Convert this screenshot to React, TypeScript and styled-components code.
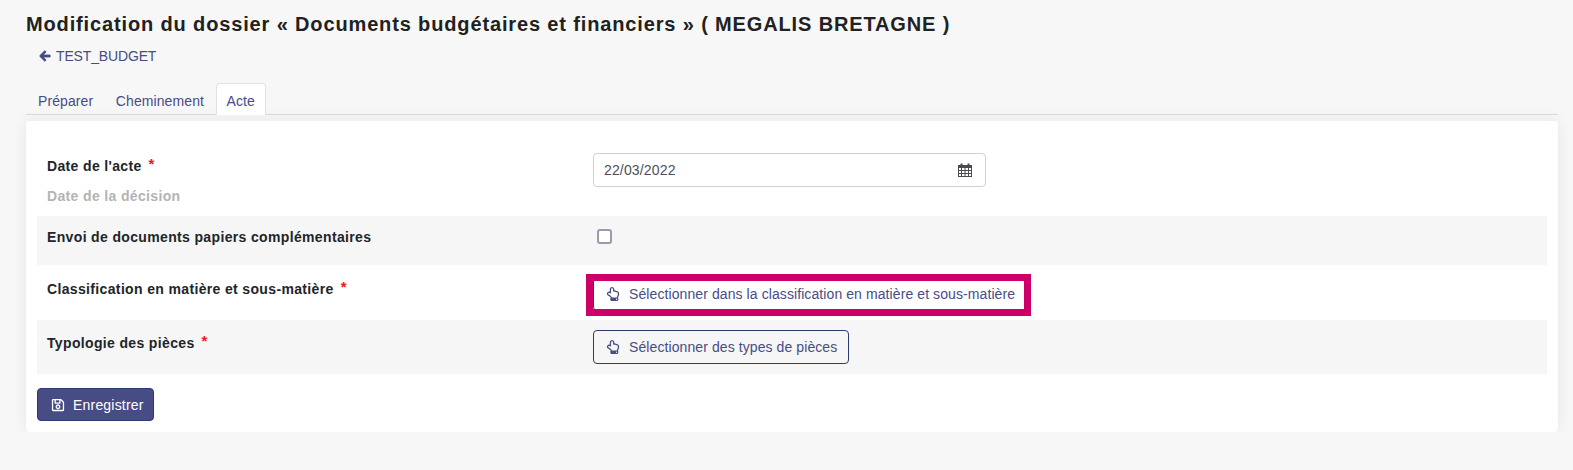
import * as React from "react";
import styled, { createGlobalStyle } from "styled-components";
import { FaArrowLeft, FaRegHandPointUp, FaRegSave } from "react-icons/fa";

const colors = {
  page: "#f7f7f7",
  stripe: "#f6f6f6",
  primary: "#484c85",
  primaryDark: "#2f3a72",
  text: "#212529",
  highlight: "#cc0066",
};

const GlobalStyle = createGlobalStyle`
  html, body {
    margin: 0;
    background: ${colors.page};
    font-family: "Liberation Sans", Arial, sans-serif;
    color: ${colors.text};
  }
`;

const Page = styled.div`
  padding: 13px 15px 0 26px;
`;

const Title = styled.h1`
  margin: 0;
  font-size: 20px;
  line-height: 22px;
  font-weight: 700;
  letter-spacing: 0.86px;
  color: #212121;
`;

const BackLink = styled.a`
  display: flex;
  align-items: center;
  gap: 5px;
  margin: 12px 0 0 13px;
  height: 18px;
  font-size: 14px;
  letter-spacing: -0.15px;
  color: ${colors.primary};
  svg {
    font-size: 12px;
    stroke: currentColor;
    stroke-width: 40;
  }
`;

const Tabs = styled.div`
  display: flex;
  align-items: flex-end;
  gap: 0.5px;
  margin-top: 18px;
  padding-left: 1px;
  height: 31px;
  border-bottom: 1px solid #dcdcde;
`;

const Tab = styled.a<{ $active?: boolean }>`
  box-sizing: border-box;
  height: 32px;
  margin-bottom: -1px;
  padding: 8px 10px 0;
  font-size: 14px;
  line-height: 18px;
  letter-spacing: 0.1px;
  color: ${colors.primary};
  border: 1px solid ${(p) => (p.$active ? "#e2e2e4" : "transparent")};
  border-bottom: 0;
  border-radius: 4px 4px 0 0;
  background: ${(p) => (p.$active ? "#fff" : "transparent")};
`;

const Card = styled.div`
  margin-top: 6px;
  padding: 20px 11px 11px;
  background: #fff;
  border-radius: 4px;
  box-shadow: 0 0 16px rgba(0, 0, 0, 0.07);
`;

const Row = styled.div<{ $striped?: boolean; $height: number }>`
  display: grid;
  grid-template-columns: 546px 1fr;
  align-items: start;
  box-sizing: border-box;
  height: ${(p) => p.$height}px;
  padding-left: 10px;
  padding-right: 10px;
  background: ${(p) => (p.$striped ? colors.stripe : "#fff")};
`;

const LabelCell = styled.div<{ $top: number }>`
  padding-top: ${(p) => p.$top}px;
`;

const ControlCell = styled.div<{ $top: number }>`
  padding-top: ${(p) => p.$top}px;
`;

const Label = styled.div`
  font-size: 14px;
  line-height: 16px;
  font-weight: 700;
  letter-spacing: 0.35px;
  color: ${colors.text};
`;

const Required = styled.span`
  position: relative;
  top: -2px;
  margin-left: 7px;
  font-size: 15px;
  color: #f0141e;
`;

const Help = styled.div`
  margin-top: 14px;
  font-size: 14px;
  line-height: 16px;
  font-weight: 700;
  letter-spacing: 0.35px;
  color: #b4b4b4;
`;

const DateField = styled.div`
  display: flex;
  align-items: center;
  justify-content: space-between;
  box-sizing: border-box;
  width: 393px;
  height: 34px;
  padding: 0 13px 0 10px;
  border: 1px solid #ced1d6;
  border-radius: 4px;
  background: #fff;
  font-size: 14px;
  letter-spacing: 0.15px;
  color: #495057;
`;

const Checkbox = styled.input`
  appearance: none;
  display: block;
  box-sizing: border-box;
  width: 15px;
  height: 15px;
  margin: 0 0 0 4px;
  border: 2px solid #9b9bad;
  border-radius: 3px;
  background: #fff;
`;

const PickButton = styled.button`
  display: inline-flex;
  align-items: center;
  gap: 9px;
  box-sizing: border-box;
  height: 34px;
  padding: 0 11px 0 12px;
  border: 1px solid ${colors.primaryDark};
  border-radius: 4px;
  background: transparent;
  font-family: inherit;
  font-size: 14px;
  letter-spacing: 0.09px;
  color: ${colors.primary};
  svg {
    font-size: 14px;
    color: ${colors.primary};
  }
`;

const Highlighted = styled.div`
  position: relative;
  display: inline-block;
  &::after {
    content: "";
    position: absolute;
    inset: -3px -4px -5px -7px;
    border: 7px solid ${colors.highlight};
  }
  button {
    display: flex;
    background: #fff;
  }
`;

const SaveButton = styled.button`
  display: inline-flex;
  align-items: center;
  gap: 8px;
  box-sizing: border-box;
  height: 33px;
  margin-top: 14px;
  padding: 0 9px 0 13px;
  border: 1px solid ${colors.primaryDark};
  border-radius: 4px;
  background: ${colors.primary};
  font-family: inherit;
  font-size: 14px;
  letter-spacing: 0.2px;
  color: #fff;
  svg {
    font-size: 14px;
  }
`;

const CalendarIcon = () => (
  <svg width="14" height="14" viewBox="0 0 14 14" fill="none" stroke="#4a4a55">
    <rect x="0.5" y="2.5" width="13" height="11" />
    <rect x="0.5" y="2" width="13" height="3" fill="#4a4a55" stroke="none" />
    <path d="M3.5 0.5v3M10.5 0.5v3" strokeWidth="2" />
    <path d="M3.5 5v8M7 5v8M10.5 5v8M1 7.5h12M1 10.5h12" strokeWidth="1" />
  </svg>
);

const App = () => {
  return (
    <Page>
      <GlobalStyle />
      <Title>Modification du dossier « Documents budgétaires et financiers » ( MEGALIS BRETAGNE )</Title>
      <BackLink>
        <FaArrowLeft />
        TEST_BUDGET
      </BackLink>
      <Tabs>
        <Tab>Préparer</Tab>
        <Tab>Cheminement</Tab>
        <Tab $active>Acte</Tab>
      </Tabs>
      <Card>
        <Row $height={75}>
          <LabelCell $top={17}>
            <Label>
              Date de l'acte<Required>*</Required>
            </Label>
            <Help>Date de la décision</Help>
          </LabelCell>
          <ControlCell $top={12}>
            <DateField>
              22/03/2022
              <CalendarIcon />
            </DateField>
          </ControlCell>
        </Row>
        <Row $striped $height={49}>
          <LabelCell $top={13}>
            <Label>Envoi de documents papiers complémentaires</Label>
          </LabelCell>
          <ControlCell $top={13}>
            <Checkbox type="checkbox" />
          </ControlCell>
        </Row>
        <Row $height={55}>
          <LabelCell $top={16}>
            <Label>
              Classification en matière et sous-matière<Required>*</Required>
            </Label>
          </LabelCell>
          <ControlCell $top={12}>
            <Highlighted>
              <PickButton>
                <FaRegHandPointUp />
                Sélectionner dans la classification en matière et sous-matière
              </PickButton>
            </Highlighted>
          </ControlCell>
        </Row>
        <Row $striped $height={54}>
          <LabelCell $top={15}>
            <Label>
              Typologie des pièces<Required>*</Required>
            </Label>
          </LabelCell>
          <ControlCell $top={10}>
            <PickButton>
              <FaRegHandPointUp />
              Sélectionner des types de pièces
            </PickButton>
          </ControlCell>
        </Row>
        <SaveButton>
          <FaRegSave />
          Enregistrer
        </SaveButton>
      </Card>
    </Page>
  );
};

export default App;
